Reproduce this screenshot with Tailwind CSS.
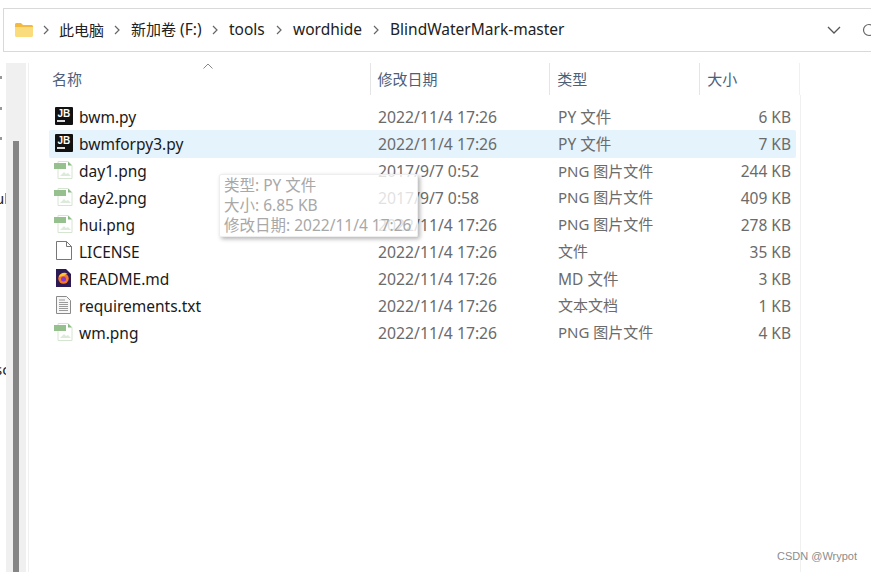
<!DOCTYPE html>
<html lang="zh">
<head>
<meta charset="utf-8">
<script src="https://cdn.jsdelivr.net/npm/@tailwindcss/browser@4"></script>
</head>
<body class="bg-white">
<div class="relative w-[871px] h-[572px] overflow-hidden bg-white text-[15.5px] text-[#1a1a1a] font-['Noto_Sans','Noto_Sans_CJK_SC',sans-serif]">
  <!-- address bar -->
  <div class="ml-[3px] mt-2 h-[44px] border border-r-0 border-[#d9d9d9] flex items-center pl-[10px] text-[#222] whitespace-nowrap">
    <svg class="shrink-0" width="20" height="16" viewBox="0 0 20 16"><path d="M1 2.500C1 1.700 1.700 1 2.500 1H7l2 2h8.500c.8 0 1.500.7 1.500 1.500V5H1z" fill="#f4b93f"/><path d="M1 5h18v8.500c0 .8-.7 1.500-1.500 1.500h-15C1.700 15 1 14.300 1 13.500z" fill="#fbdc7c"/></svg>
    <svg class="shrink-0 ml-[9px] mr-[10px]" width="6" height="10" viewBox="0 0 6 10"><path d="M1 1l4 4-4 4" fill="none" stroke="#666" stroke-width="1.200"/></svg>
    <span class="w-[45px] shrink-0 text-[15px]">此电脑</span>
    <svg class="shrink-0 ml-[10px] mr-[11px]" width="6" height="10" viewBox="0 0 6 10"><path d="M1 1l4 4-4 4" fill="none" stroke="#666" stroke-width="1.200"/></svg>
    <span class="w-[71px] shrink-0"><span class="text-[15px]">新加卷</span> (F:)</span>
    <svg class="shrink-0 ml-[10px] mr-[11px]" width="6" height="10" viewBox="0 0 6 10"><path d="M1 1l4 4-4 4" fill="none" stroke="#666" stroke-width="1.200"/></svg>
    <span class="w-[37px] shrink-0">tools</span>
    <svg class="shrink-0 ml-[10px] mr-[11px]" width="6" height="10" viewBox="0 0 6 10"><path d="M1 1l4 4-4 4" fill="none" stroke="#666" stroke-width="1.200"/></svg>
    <span class="w-[70px] shrink-0">wordhide</span>
    <svg class="shrink-0 ml-[10px] mr-[11px]" width="6" height="10" viewBox="0 0 6 10"><path d="M1 1l4 4-4 4" fill="none" stroke="#666" stroke-width="1.200"/></svg>
    <span class="w-[173px] shrink-0">BlindWaterMark-master</span>
    <svg class="shrink-0 ml-[264px]" width="14" height="8" viewBox="0 0 14 8"><path d="M1 1l6 6 6-6" fill="none" stroke="#555" stroke-width="1.300"/></svg>
    <svg class="shrink-0 ml-[21px]" width="14" height="14" viewBox="0 0 14 14"><circle cx="7" cy="7" r="5.500" fill="none" stroke="#666" stroke-width="1.200"/></svg>
  </div>

  <div class="flex h-[509px] mt-[11px]">
    <!-- clipped navigation pane -->
    <div class="w-[6px] overflow-hidden text-[#222] text-[15px] leading-none">
      <div class="h-[13px]"></div>
      <div class="h-[31px]"><span class="block w-[2px] h-[3px] bg-[#999]"></span></div>
      <div class="h-[30px]"><span class="block w-[2px] h-[3px] bg-[#999]"></span></div>
      <div class="h-[54px]"><span class="block w-[2px] h-[3px] bg-[#999]"></span></div>
      <div class="h-[171px] -ml-[5px] whitespace-nowrap">ul</div>
      <div class="-ml-[5px] whitespace-nowrap">sc</div>
    </div>
    <!-- scrollbar -->
    <div class="w-[20px] bg-[#f0f0f0] pt-[78px] pl-[7px]"><div class="w-[6px] h-full bg-[#858585]"></div></div>
    <div class="w-[2px]"></div>
    <div class="w-px bg-[#f0f0f0]"></div>

    <!-- file list -->
    <div class="w-[771px] flex flex-col">
      <div class="flex h-[32px] relative text-[15px] text-[#4c607a]">
        <div class="w-[342px] pl-[23px] pt-[5px] border-r border-[#e5e5e5]">名称</div>
        <div class="w-[180px] pl-[7px] pt-[5px] border-r border-[#e5e5e5]">修改日期</div>
        <div class="w-[150px] pl-[7px] pt-[5px] border-r border-[#e5e5e5]">类型</div>
        <div class="w-[100px] pl-[7px] pt-[5px] border-r border-[#f0f0f0]">大小</div>
        <svg class="absolute left-[174px] top-0" width="10" height="6" viewBox="0 0 10 6"><path d="M.5 5.500L5 1l4.500 4.500" fill="none" stroke="#888"/></svg>
      </div>
      <div class="h-[9px] border-r border-[#f0f0f0] w-[772px]"></div>
      <div class="w-[772px] border-r border-[#f0f0f0] flex-1 text-[#6b6b6b]">

        <div class="flex items-center h-[26px] pt-[2px] ml-[20px] w-[747px]">
          <div class="w-[30px] pl-[6px] -mt-[4px] shrink-0"><svg class="block" width="18" height="18" viewBox="0 0 18 18"><rect width="18" height="18" rx="1" fill="#111"/><rect x="2" y="13" width="8" height="2" fill="#ddd"/><text x="2.500" y="10" font-size="10" font-weight="700" fill="#fff" font-family="Liberation Sans">JB</text></svg></div>
          <div class="w-[299px] text-[#1a1a1a]">bwm.py</div>
          <div class="w-[180px] text-[15.75px]">2022/11/4 17:26</div>
          <div class="w-[150px]">PY 文件</div>
          <div class="w-[83px] text-right">6 KB</div>
        </div>

        <div class="flex items-center h-[28px] pt-[2px] ml-[20px] w-[747px] bg-[#e5f3fd] rounded-[2px]">
          <div class="w-[30px] pl-[6px] -mt-[4px] shrink-0"><svg class="block" width="18" height="18" viewBox="0 0 18 18"><rect width="18" height="18" rx="1" fill="#111"/><rect x="2" y="13" width="8" height="2" fill="#ddd"/><text x="2.500" y="10" font-size="10" font-weight="700" fill="#fff" font-family="Liberation Sans">JB</text></svg></div>
          <div class="w-[299px] text-[#1a1a1a]">bwmforpy3.py</div>
          <div class="w-[180px] text-[15.75px]">2022/11/4 17:26</div>
          <div class="w-[150px]">PY 文件</div>
          <div class="w-[83px] text-right">7 KB</div>
        </div>

        <div class="flex items-center h-[26px] pt-[2px] ml-[20px] w-[747px]">
          <div class="w-[30px] pl-[5px] -mt-[4px] shrink-0"><svg class="block" width="19" height="18" viewBox="0 0 19 18"><path d="M4 .5h10l4 4v13H4z" fill="#fff" stroke="#d5e5d2"/><path d="M14 .5v4h4z" fill="#8dbb85"/><rect y="2" width="12" height="6" fill="#97c08f"/><path d="M6 15l4-4 2 2 2-1 3 3z" fill="#dcebd9"/></svg></div>
          <div class="w-[299px] text-[#1a1a1a]">day1.png</div>
          <div class="w-[180px] text-[15.75px]">2017/9/7 0:52</div>
          <div class="w-[150px] text-[15px] -mt-[2px]">PNG 图片文件</div>
          <div class="w-[83px] text-right">244 KB</div>
        </div>

        <div class="flex items-center h-[27px] pt-[2px] ml-[20px] w-[747px]">
          <div class="w-[30px] pl-[5px] -mt-[4px] shrink-0"><svg class="block" width="19" height="18" viewBox="0 0 19 18"><path d="M4 .5h10l4 4v13H4z" fill="#fff" stroke="#d5e5d2"/><path d="M14 .5v4h4z" fill="#8dbb85"/><rect y="2" width="12" height="6" fill="#97c08f"/><path d="M6 15l4-4 2 2 2-1 3 3z" fill="#dcebd9"/></svg></div>
          <div class="w-[299px] text-[#1a1a1a]">day2.png</div>
          <div class="w-[180px] text-[15.75px]">2017/9/7 0:58</div>
          <div class="w-[150px] text-[15px] -mt-[2px]">PNG 图片文件</div>
          <div class="w-[83px] text-right">409 KB</div>
        </div>

        <div class="flex items-center h-[27px] pt-[2px] ml-[20px] w-[747px]">
          <div class="w-[30px] pl-[5px] -mt-[4px] shrink-0"><svg class="block" width="19" height="18" viewBox="0 0 19 18"><path d="M4 .5h10l4 4v13H4z" fill="#fff" stroke="#d5e5d2"/><path d="M14 .5v4h4z" fill="#8dbb85"/><rect y="2" width="12" height="6" fill="#97c08f"/><path d="M6 15l4-4 2 2 2-1 3 3z" fill="#dcebd9"/></svg></div>
          <div class="w-[299px] text-[#1a1a1a]">hui.png</div>
          <div class="w-[180px] text-[15.75px]">2022/11/4 17:26</div>
          <div class="w-[150px] text-[15px] -mt-[2px]">PNG 图片文件</div>
          <div class="w-[83px] text-right">278 KB</div>
        </div>

        <div class="flex items-center h-[27px] pt-[2px] ml-[20px] w-[747px]">
          <div class="w-[30px] pl-[7px] -mt-[4px] shrink-0"><svg class="block" width="16" height="19" viewBox="0 0 16 19"><path d="M.5.500h10l5 5v13H.5z" fill="#fff" stroke="#777"/><path d="M10.500.500v5h5" fill="none" stroke="#777"/></svg></div>
          <div class="w-[299px] text-[#1a1a1a]">LICENSE</div>
          <div class="w-[180px] text-[15.75px]">2022/11/4 17:26</div>
          <div class="w-[150px] text-[15px] -mt-[2px]">文件</div>
          <div class="w-[83px] text-right">35 KB</div>
        </div>

        <div class="flex items-center h-[27px] pt-[2px] ml-[20px] w-[747px]">
          <div class="w-[30px] pl-[7px] -mt-[4px] shrink-0"><svg class="block" width="15" height="18" viewBox="0 0 15 18"><path d="M0 0h10l5 5v13H0z" fill="#2c1a55"/><circle cx="7.500" cy="9.500" r="5.200" fill="#f9772a"/><path d="M2.800 8c1-4 6-6 9.500-2.500C11 4.800 9.500 5 9 6.500z" fill="#fdc52f"/><circle cx="7.500" cy="10" r="2.500" fill="#8a3bc9"/></svg></div>
          <div class="w-[299px] text-[#1a1a1a]">README.md</div>
          <div class="w-[180px] text-[15.75px]">2022/11/4 17:26</div>
          <div class="w-[150px]">MD 文件</div>
          <div class="w-[83px] text-right">3 KB</div>
        </div>

        <div class="flex items-center h-[27px] pt-[2px] ml-[20px] w-[747px]">
          <div class="w-[30px] pl-[7px] -mt-[4px] shrink-0"><svg class="block" width="15" height="18" viewBox="0 0 15 18"><path d="M.5.500h10l4 4v13H.5z" fill="#f7f7f7" stroke="#8a8a8a"/><path d="M3 4h6M3 6.500h9M3 8.500h9M3 10.500h9M3 12.500h9M3 14.500h9" stroke="#9a9a9a"/></svg></div>
          <div class="w-[299px] text-[#1a1a1a]">requirements.txt</div>
          <div class="w-[180px] text-[15.75px]">2022/11/4 17:26</div>
          <div class="w-[150px] text-[15px] -mt-[2px]">文本文档</div>
          <div class="w-[83px] text-right">1 KB</div>
        </div>

        <div class="flex items-center h-[27px] pt-[2px] ml-[20px] w-[747px]">
          <div class="w-[30px] pl-[5px] -mt-[4px] shrink-0"><svg class="block" width="19" height="18" viewBox="0 0 19 18"><path d="M4 .5h10l4 4v13H4z" fill="#fff" stroke="#d5e5d2"/><path d="M14 .5v4h4z" fill="#8dbb85"/><rect y="2" width="12" height="6" fill="#97c08f"/><path d="M6 15l4-4 2 2 2-1 3 3z" fill="#dcebd9"/></svg></div>
          <div class="w-[299px] text-[#1a1a1a]">wm.png</div>
          <div class="w-[180px] text-[15.75px]">2022/11/4 17:26</div>
          <div class="w-[150px] text-[15px] -mt-[2px]">PNG 图片文件</div>
          <div class="w-[83px] text-right">4 KB</div>
        </div>
      </div>
    </div>
  </div>

  <!-- tooltip -->
  <div class="absolute left-[219px] top-[174px] w-[199px] h-[63px] bg-white/80 border border-[#eeeeee] rounded-[2px] shadow-[2px_2px_4px_rgba(0,0,0,0.3)] pl-[4px] text-[15.5px] leading-[20px] text-[#a8a8a8] whitespace-nowrap">
    <div>类型: PY 文件</div>
    <div>大小: 6.85 KB</div>
    <div>修改日期: 2022/11/4 17:26</div>
  </div>

  <!-- watermark -->
  <div class="absolute left-[777px] top-[548px] text-[11px] text-[#8c8c8c] font-['Liberation_Sans',sans-serif] whitespace-nowrap">CSDN @Wrypot</div>
</div>
</body>
</html>
